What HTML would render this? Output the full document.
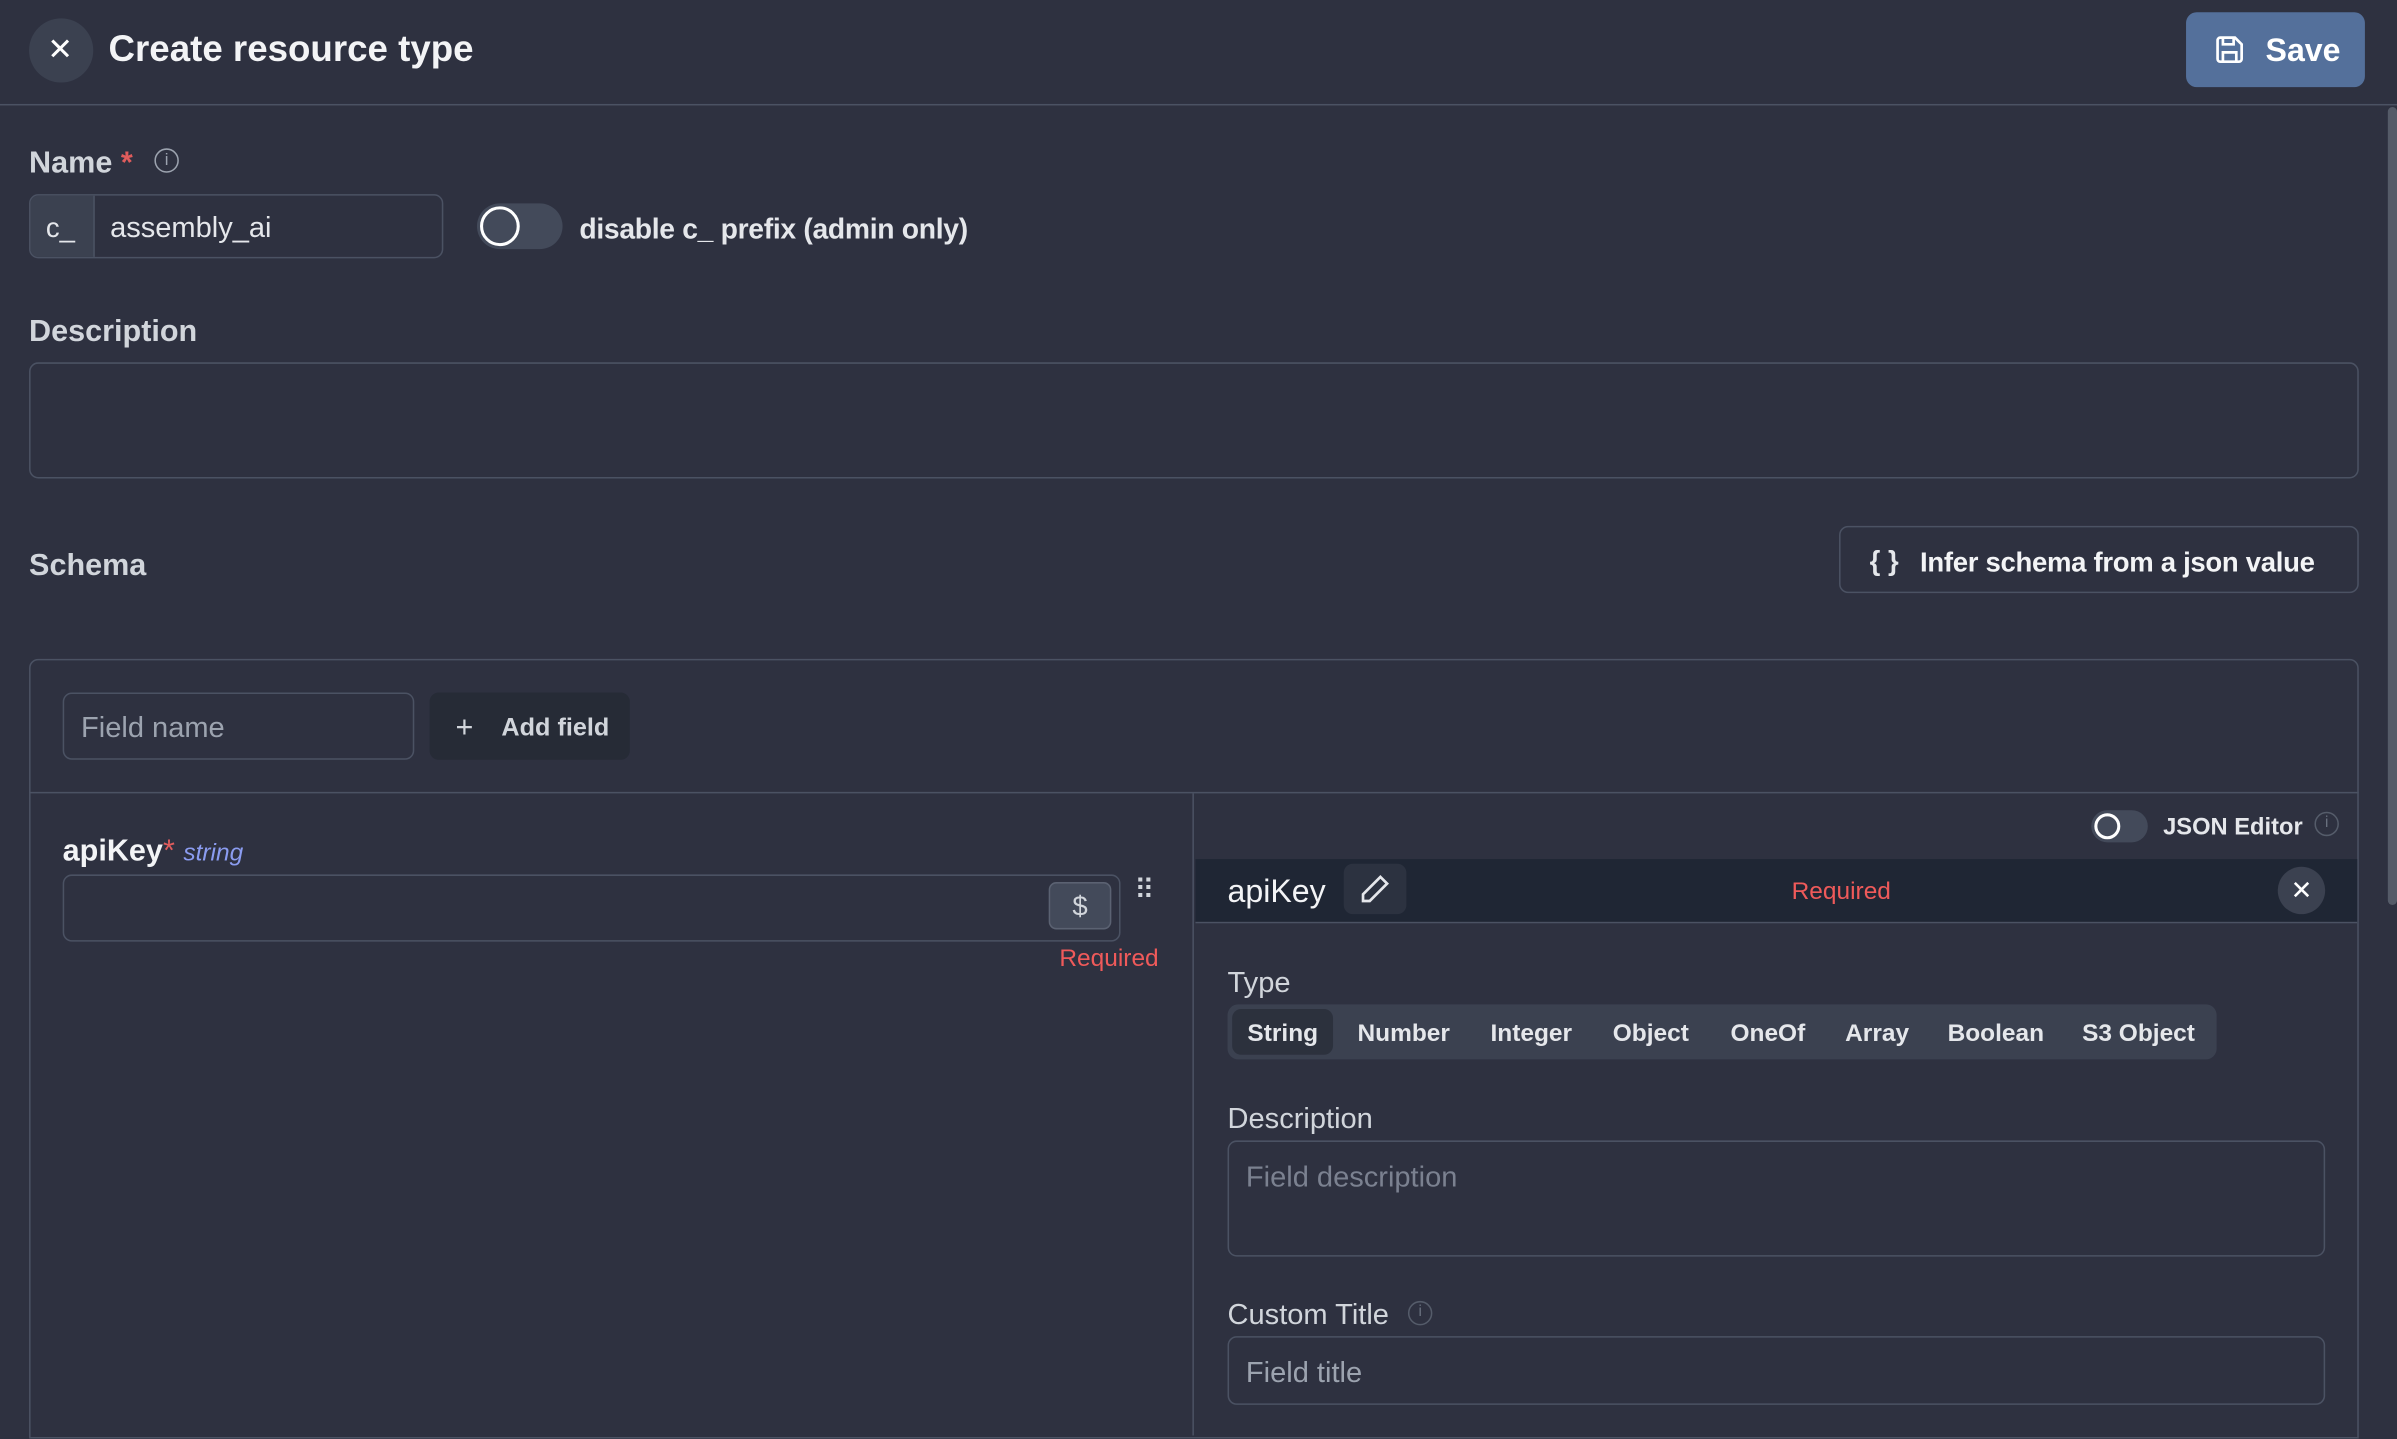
<!DOCTYPE html>
<html><head><meta charset="utf-8"><style>
html,body{margin:0;padding:0;background:#2e3140;overflow:hidden;width:2397px;height:1418px}
#w{position:absolute;left:0;top:0;width:1568px;height:928px;transform:scale(1.52870);transform-origin:0 0;font-family:"Liberation Sans",sans-serif;color:#e5e7eb}
.a{position:absolute}
.t{margin-top:2px}
.b{border:1px solid #4b5263;border-radius:6px;box-sizing:border-box}
.lbl{font-size:20px;font-weight:bold;color:#d1d5db}
.tog{position:absolute;background:#434a5a;border-radius:16px}
.tog i{position:absolute;border:2px solid #fff;border-radius:50%;box-sizing:border-box}
.ii{position:absolute;border:1.5px solid #555c6a;border-radius:50%;font-size:10px;text-align:center;color:#6b7280;box-sizing:border-box}
</style></head><body><div id="w">
<div class="a" style="left:19px;top:12px;width:42px;height:42px;border-radius:50%;background:#3b4150"></div>
<div class="a" style="left:31px;top:20px;font-size:20px;color:#fff">✕</div>
<div class="a t" style="left:71px;top:17px;font-size:24px;font-weight:bold;color:#f3f4f6">Create resource type</div>
<div class="a" style="left:1430px;top:8px;width:117px;height:49px;background:#54709b;border-radius:7px"></div>
<svg class="a" style="left:1448px;top:22px" width="21" height="21" viewBox="0 0 24 24" fill="none" stroke="#fff" stroke-width="2"><path d="M5 3h11l5 5v11a2 2 0 0 1-2 2H5a2 2 0 0 1-2-2V5a2 2 0 0 1 2-2z M7 3v5h8V3 M7 21v-7h10v7"/></svg>
<div class="a t" style="left:1482px;top:20px;font-size:21px;font-weight:bold;color:#fff">Save</div>
<div class="a" style="left:0;top:68px;width:1568px;height:1px;background:#4b5263"></div>
<div class="a" style="left:1562px;top:70px;width:6px;height:522px;background:#555b68;border-radius:3px"></div>

<div class="a lbl t" style="left:19px;top:94px">Name <span style="color:#e05c5c">*</span></div>
<div class="a" style="left:101px;top:97px;width:14px;height:14px;border:1.5px solid #9ca3af;border-radius:50%;font-size:11px;text-align:center;line-height:14px;color:#9ca3af">i</div>
<div class="a b" style="left:19px;top:127px;width:271px;height:42px;overflow:hidden"><div style="width:42px;height:42px;background:#3b4150;border-right:1px solid #4b5263;box-sizing:border-box"></div></div>
<div class="a t" style="left:30px;top:137px;font-size:18px;color:#e5e7eb">c_</div>
<div class="a t" style="left:72px;top:137px;font-size:19px;color:#e5e7eb">assembly_ai</div>
<div class="tog" style="left:312px;top:133px;width:56px;height:30px"><i style="left:2px;top:2px;width:26px;height:26px"></i></div>
<div class="a t" style="left:379px;top:137px;font-size:18.5px;font-weight:bold;color:#e5e7eb;letter-spacing:-0.2px">disable c_ prefix (admin only)</div>

<div class="a lbl t" style="left:19px;top:204px">Description</div>
<div class="a b" style="left:19px;top:237px;width:1524px;height:76px"></div>

<div class="a lbl t" style="left:19px;top:357px">Schema</div>
<div class="a b" style="left:1203px;top:344px;width:340px;height:44px"></div>
<div class="a t" style="left:1223px;top:355px;font-size:18px;font-weight:bold">{ }</div>
<div class="a t" style="left:1256px;top:356px;font-size:18px;font-weight:bold;color:#f3f4f6;letter-spacing:-0.2px">Infer schema from a json value</div>

<div class="a" style="left:19px;top:431px;width:1524px;height:510px;border:1px solid #4b5263;border-radius:6px 6px 0 0;box-sizing:border-box"></div>
<div class="a b" style="left:41px;top:453px;width:230px;height:44px"></div>
<div class="a t" style="left:53px;top:464px;font-size:19px;color:#9ca3af">Field name</div>
<div class="a" style="left:281px;top:453px;width:131px;height:44px;border-radius:6px;background:#262b36"></div>
<div class="a t" style="left:298px;top:463px;font-size:20px;color:#d1d5db">+</div>
<div class="a t" style="left:328px;top:465px;font-size:16.5px;font-weight:bold;color:#d1d5db">Add field</div>
<div class="a" style="left:19px;top:518px;width:1524px;height:1px;background:#4b5263"></div>
<div class="a" style="left:780px;top:519px;width:1px;height:420px;background:#4b5263"></div>

<div class="a t" style="left:41px;top:544px;font-size:20px;font-weight:bold;color:#f3f4f6">apiKey<span style="color:#e05c5c;font-weight:normal">*</span> <span style="font-size:16px;font-style:italic;font-weight:normal;color:#8b9cf0">string</span></div>
<div class="a b" style="left:41px;top:572px;width:692px;height:44px"></div>
<div class="a" style="left:686px;top:577px;width:41px;height:31px;background:#434a5a;border:1px solid #5b6272;border-radius:5px;box-sizing:border-box;text-align:center;font-size:18px;line-height:30px;color:#d1d5db">$</div>
<div class="a" style="left:742px;top:572px;font-size:18px;color:#d1d5db">⠿</div>
<div class="a t" style="left:693px;top:617px;font-size:16px;color:#ef5a5a">Required</div>

<div class="tog" style="left:1368px;top:530px;width:37px;height:21px"><i style="left:2px;top:2px;width:17px;height:17px"></i></div>
<div class="a t" style="left:1415px;top:531px;font-size:15.5px;font-weight:bold">JSON Editor</div>
<div class="ii" style="left:1514px;top:531px;width:16px;height:16px;line-height:13px">i</div>
<div class="a" style="left:782px;top:562px;width:760px;height:41px;background:#1f2634;border-bottom:1px solid #4b5263"></div>
<div class="a t" style="left:803px;top:570px;font-size:21px;color:#f3f4f6">apiKey</div>
<div class="a" style="left:879px;top:565px;width:41px;height:33px;background:#2c3240;border-radius:6px"></div>
<svg class="a" style="left:889px;top:571px" width="21" height="21" viewBox="0 0 24 24" fill="none" stroke="#e5e7eb" stroke-width="2"><path d="M16 3l5 5L8 21H3v-5z"/></svg>
<div class="a t" style="left:1172px;top:573px;font-size:16px;color:#ef5a5a">Required</div>
<div class="a" style="left:1490px;top:567px;width:31px;height:31px;border-radius:50%;background:#3b4150;text-align:center;line-height:31px;font-size:17px;color:#fff">✕</div>

<div class="a t" style="left:803px;top:631px;font-size:19px;color:#d1d5db">Type</div>
<div class="a" style="left:803px;top:657px;width:647px;height:36px;background:#3b4150;border-radius:7px"></div>
<div class="a" style="left:806px;top:660px;width:66px;height:30px;background:#2c313d;border-radius:6px"></div>
<div class="a t" style="left:816px;top:666px;font-size:16px;font-weight:bold">String</div>
<div class="a t" style="left:888px;top:666px;font-size:16px;font-weight:bold">Number</div>
<div class="a t" style="left:975px;top:666px;font-size:16px;font-weight:bold">Integer</div>
<div class="a t" style="left:1055px;top:666px;font-size:16px;font-weight:bold">Object</div>
<div class="a t" style="left:1132px;top:666px;font-size:16px;font-weight:bold">OneOf</div>
<div class="a t" style="left:1207px;top:666px;font-size:16px;font-weight:bold">Array</div>
<div class="a t" style="left:1274px;top:666px;font-size:16px;font-weight:bold">Boolean</div>
<div class="a t" style="left:1362px;top:666px;font-size:16px;font-weight:bold">S3 Object</div>

<div class="a t" style="left:803px;top:720px;font-size:19px;color:#d1d5db">Description</div>
<div class="a b" style="left:803px;top:746px;width:718px;height:76px"></div>
<div class="a t" style="left:815px;top:758px;font-size:19px;color:#7b8190">Field description</div>
<div class="a t" style="left:803px;top:848px;font-size:19px;color:#d1d5db">Custom Title</div>
<div class="ii" style="left:921px;top:851px;width:16px;height:16px;line-height:13px">i</div>
<div class="a b" style="left:803px;top:874px;width:718px;height:45px"></div>
<div class="a t" style="left:815px;top:886px;font-size:19px;color:#9ca3af">Field title</div>
</div></body></html>
